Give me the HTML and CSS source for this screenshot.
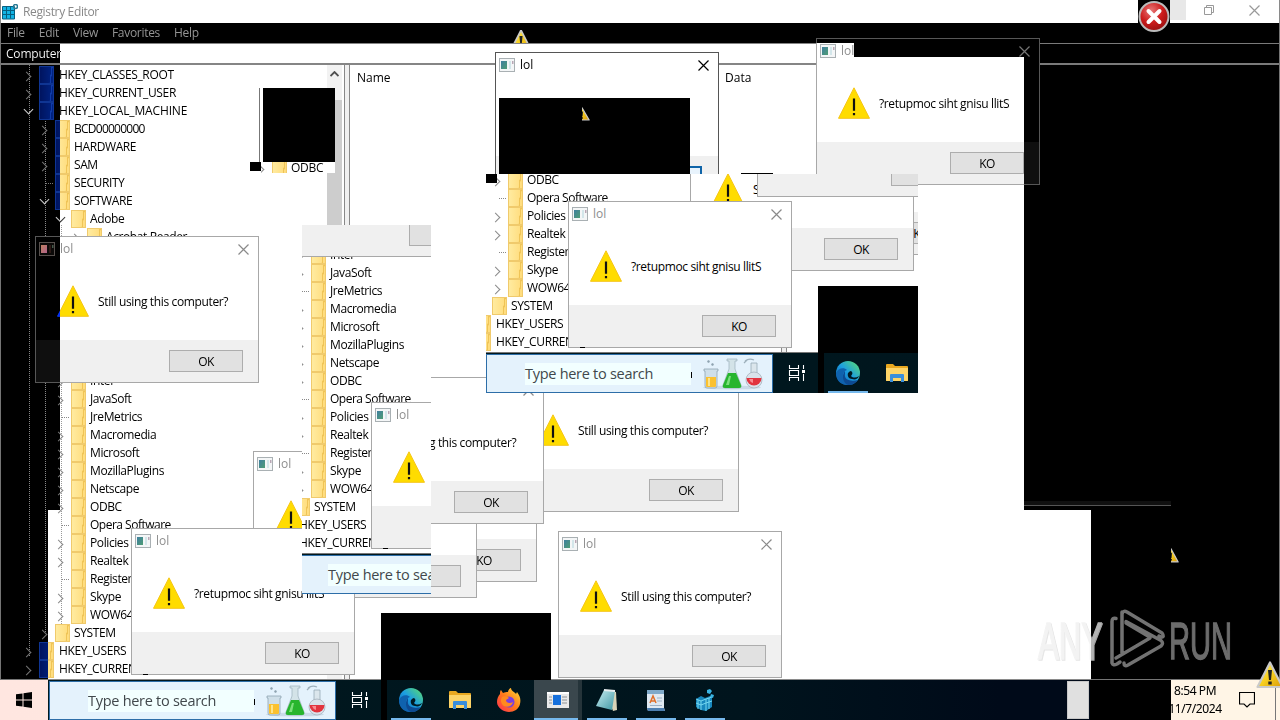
FILE: index.html
```html
<!DOCTYPE html>
<html lang="en">
<head>
<meta charset="utf-8">
<title>Registry Editor</title>
<link rel="stylesheet" href="styles.css">
</head>
<body>
<svg width="0" height="0" class="defs">
  <defs>
    <linearGradient id="gold" x1="0" y1="0" x2="1" y2="1"><stop offset="0" stop-color="#fff47a"/><stop offset=".5" stop-color="#f8d020"/><stop offset="1" stop-color="#d99a08"/></linearGradient>
    <linearGradient id="edgeg" x1="0" y1="1" x2="1" y2="0"><stop offset="0" stop-color="#0c59a4"/><stop offset=".5" stop-color="#1b9de2"/><stop offset="1" stop-color="#5fe06a"/></linearGradient>
    <linearGradient id="ffg" x1="0" y1="1" x2="1" y2="0"><stop offset="0" stop-color="#ff2a55"/><stop offset=".5" stop-color="#ff7a1a"/><stop offset="1" stop-color="#ffe03a"/></linearGradient>
    <linearGradient id="appg" x1="0" y1="0" x2="1" y2="1"><stop offset="0" stop-color="#3f7fa0"/><stop offset="1" stop-color="#4f9d74"/></linearGradient>
    <linearGradient id="noteg" x1="0" y1="0" x2="1" y2="1"><stop offset="0" stop-color="#c8eef2"/><stop offset="1" stop-color="#3f97a4"/></linearGradient>
    <radialGradient id="redg" cx=".4" cy=".3" r=".8"><stop offset="0" stop-color="#e87878"/><stop offset=".5" stop-color="#cc1c1c"/><stop offset="1" stop-color="#8c0c0c"/></radialGradient>
  </defs>
  <symbol id="app" viewBox="0 0 16 14"><rect x=".5" y=".5" width="15" height="13" fill="#f4f6f7" stroke="#a9b0b3"/><rect x="2" y="3" width="6" height="8" fill="url(#appg)"/><path d="M10 3h2v8h-2z" fill="#d3e6ea"/><path d="M13 3h1.500v3H13z" fill="#b9a7b5"/></symbol>
  <symbol id="warn" viewBox="0 0 32 32"><path d="M16 .8 31.500 31.300H.5z" fill="#ffdc00" stroke="#f5c518" stroke-width="1"/><path d="M14.900 11.500h2.200v12.300h-2.200zM14.900 26h2.200v2.300h-2.200z" fill="#111"/></symbol>
  <symbol id="warn3" viewBox="0 0 28 28"><path d="M14 1.500 26.500 26h-25z" fill="url(#gold)" stroke="#c9c9c9" stroke-width="2.200" stroke-linejoin="round"/><path d="M12 9h4l-1 10h-2zM12.300 20.500h3.400v3h-3.400z" fill="#222"/></symbol>
  <symbol id="x" viewBox="0 0 11 11"><path d="M.5.5l10 10M10.500.5l-10 10" fill="none" stroke="currentColor" stroke-width="1.200"/></symbol>
  <symbol id="flasks" viewBox="0 0 62 32">
    <ellipse cx="31" cy="29.500" rx="29" ry="2" fill="#c9dbe8"/>
    <path d="M3 11h14v2h-1v15q0 2-2 2H6q-2 0-2-2V13H3z" fill="#cfdfe9" stroke="#8fa4b3" stroke-width=".8"/><path d="M5 19h10v9q0 1-1 1H6q-1 0-1-1z" fill="#fbc12f"/><path d="M7 20h2v8H7z" fill="#ffe58a"/><path d="M6 3l2-1 1 2-2 1zM10 6l2-1 1 2-2 1z" fill="#8ea3b0"/>
    <path d="M26 1h10v2h-2v8l6 16q1 3-2 3H24q-3 0-2-3l6-16V3h-2z" fill="#d3e3e8" stroke="#9bb0ba" stroke-width=".7"/><path d="M27 15h8l5 12q1 3-2 3H24q-3 0-2-3z" fill="#27b52e"/><path d="M28 18l-3 9h3l2-9z" fill="#7be07c"/>
    <path d="M44 3q4-3 9-1M43 5l3-3" fill="none" stroke="#9db0bc" stroke-width="1.300"/><path d="M50 5h6v10h-6z" fill="#dbe6ec" stroke="#98abb8" stroke-width=".8"/><circle cx="53" cy="22" r="8" fill="#d9e2ea" stroke="#a7b3be" stroke-width=".8"/><path d="M45.500 20h15a7.500 7.500 0 1 1-15 0z" fill="#e2343f"/><path d="M48 21h4v4q-3-1-4-4z" fill="#f88a90"/>
  </symbol>
  <symbol id="win" viewBox="0 0 16 16"><path d="M0 2.300 6.500 1.400v6.100H0zM7.500 1.200 16 0v7.500H7.500zM0 8.500h6.500v6.100L0 13.700zM7.500 8.500H16V16l-8.500-1.200z" fill="#fff"/></symbol>
  <symbol id="task" viewBox="0 0 18 16"><path d="M1.500 0v3.500h9V0M1.500 16v-3.500h9V16M1.500 5.500h9v5h-9zM15.500 0v4M15.500 9v7" fill="none" stroke="#fff" stroke-width="1.100"/><path d="M14 5h3v3h-3z" fill="#fff"/></symbol>
  <symbol id="edge" viewBox="0 0 24 24"><circle cx="12" cy="12" r="12" fill="url(#edgeg)"/><path d="M0 12C2 7 8 6 11 9c-4 1-6 7-2 12 1 1 2 2 4 2.900C5 25 0 19 0 12z" fill="#0f62ae"/><path d="M9 13c-1 5 4 8 13 6-3 4-7 5.500-10 5-5-2-7-9-3-14z" fill="#0d4a92"/><path d="M12 12c2-2 3-3 4-1 1 1 0 3-1 4 2 2 5 2 8 0-1 3-4 4-7 3-3 0-5-3-4-6z" fill="#001a24"/></symbol>
  <symbol id="exp" viewBox="0 0 22 18"><path d="M0 1q0-1 1-1h6l2 2h12q1 0 1 1v14H0z" fill="#e9a820"/><path d="M0 4h22v12q0 1-1 1H1q-1 0-1-1z" fill="#fdd468"/><path d="M4 18v-7q0-1 1-1h12q1 0 1 1v7h-3v-4H7v4z" fill="#3a8edb"/></symbol>
  <symbol id="ff" viewBox="0 0 24 24"><path d="M3 6c0-2 0-3 1-4l2 3c2-1 3-1 5-1 0-2 2-4 3-4 0 3 4 4 5 6l1-2c3 4 4 7 3 12-1 5-6 8-11 8S0 20 0 14c0-3 1-6 3-8z" fill="url(#ffg)"/><circle cx="12" cy="14" r="5.500" fill="#7a3fe0"/><path d="M5 9c2-1 5-1 7 1l-3 2c0 3 4 4 7 2-1 4-5 6-9 4-3-2-4-6-2-9z" fill="#ff8a1f"/></symbol>
  <symbol id="dlgapp" viewBox="0 0 22 16"><path d="M0 0h22v16H0z" fill="#e9e9e9"/><path d="M0 0h22v2H0z" fill="#fff"/><path d="M6 3h8v10H6z" fill="#1670dc"/><path d="M2 5h3M2 8h3M2 11h3M15 5h5M15 8h5M15 11h5" stroke="#8f9396"/></symbol>
  <symbol id="note" viewBox="0 0 24 24"><path d="M10 2l11 2 1 18-4 1z" fill="#d9d4b8"/><path d="M9 2l11 1-3 19L1 18z" fill="url(#noteg)"/><path d="M9 2l11 1" stroke="#e8eef0" stroke-width="2"/></symbol>
  <symbol id="wpad" viewBox="0 0 20 22"><path d="M1 1h17v18l1 3H2l-1-3z" fill="#dfe9f2"/><path d="M1 1h17v4H1z" fill="#7fa9c9"/><path d="M4 14l3-7 3 7M5 12h4" fill="none" stroke="#e0702a" stroke-width="1.500"/><path d="M11 9h5M11 12h5M4 16.500h12" stroke="#9db2c6"/><path d="M1 19h17l1 3H2z" fill="#4d7fb0"/></symbol>
  <symbol id="reg" viewBox="0 0 20 22"><path d="M1 10l5-3 4 2 5-2 2 1v10l-6 4-5-1-5-3z" fill="#1787bd"/><path d="M1 10l5 2v9M6 12l5-2v12M1 14l5 2 5-2 6-2M11 10l6-2M14 9v11M3 11v9" fill="none" stroke="#74d8f0" stroke-width="1"/><path d="M12 1l3-1 2 2-2 3-3-1zM16 5l3 1-1 3-3-1z" fill="#39b4e4"/></symbol>
</svg>

<main class="desktop">
  <section class="window">
    <header class="titlebar">
      <svg class="regicon" viewBox="0 0 16 16"><path d="M0 2.500h12V15H0z" fill="#12b3e4"/><path d="M.5 6.500h12M.5 10.500h12M4.500 2v12.500M8.500 2v12.500M.5 2.500h12v12.500H.5z" fill="none" stroke="#075f80"/><circle cx="13.500" cy="2.500" r="2" fill="none" stroke="#2a7a94" stroke-width="1.500"/></svg>
      <span class="caption">Registry Editor</span>
      <span class="shade"></span>
      <svg class="restore" viewBox="0 0 10 10"><path d="M.5 2.500h7v7h-7zM2.500 2.500v-2h7v7h-2" fill="none" stroke="#999"/></svg>
      <svg class="xbtn"><use href="#x"/></svg>
    </header>
    <nav class="menu"><span>File</span><span>Edit</span><span>View</span><span>Favorites</span><span>Help</span></nav>
    <div class="address">Computer</div>
    <div class="panes">
      <div class="tree">
        <div class="row l0 c">HKEY_CLASSES_ROOT</div>
        <div class="row l0 c">HKEY_CURRENT_USER</div>
        <div class="row l0 o wide">HKEY_LOCAL_MACHINE</div>
        <div class="row l1 c tight">BCD00000000</div>
        <div class="row l1 c">HARDWARE</div>
        <div class="row l1 c">SAM</div>
        <div class="row l1 n">SECURITY</div>
        <div class="row l1 o">SOFTWARE</div>
        <div class="row l2 o">Adobe</div>
        <div class="row l3 c">Acrobat Reader</div>
        <div class="gap"></div>
        <div class="row l2 c">Intel</div>
        <div class="row l2 c">JavaSoft</div>
        <div class="row l2 n">JreMetrics</div>
        <div class="row l2 c">Macromedia</div>
        <div class="row l2 c">Microsoft</div>
        <div class="row l2 c">MozillaPlugins</div>
        <div class="row l2 c">Netscape</div>
        <div class="row l2 c">ODBC</div>
        <div class="row l2 n soft">Opera Software</div>
        <div class="row l2 c">Policies</div>
        <div class="row l2 c">Realtek</div>
        <div class="row l2 n">Register</div>
        <div class="row l2 c">Skype</div>
        <div class="row l2 c">WOW64</div>
        <div class="row l1 c">SYSTEM</div>
        <div class="row l0 c">HKEY_USERS</div>
        <div class="row l0 c">HKEY_CURREN</div>
      </div>
      <div class="scroll"><svg viewBox="0 0 9 6"><path d="M.5 5 4.500 1l4 4" fill="none" stroke="#505050" stroke-width="1.800"/></svg><div class="thumb"></div></div>
      <div class="divider"></div>
      <div class="list"><span class="col-name">Name</span><span>Data</span></div>
    </div>
  </section>

  <footer class="taskbar">
    <div class="start"><svg><use href="#win"/></svg></div>
    <div class="search"><span class="hint">Type here to search</span><i class="caret"></i><svg><use href="#flasks"/></svg></div>
    <div class="tb view"><svg><use href="#task"/></svg></div>
    <div class="strip"></div>
    <div class="tb run"><svg class="i24"><use href="#edge"/></svg></div>
    <div class="tb"><svg class="i22"><use href="#exp"/></svg></div>
    <div class="tb"><svg class="i24"><use href="#ff"/></svg></div>
    <div class="tb run active"><svg class="i22 s16"><use href="#dlgapp"/></svg></div>
    <div class="tb run"><svg class="i24"><use href="#note"/></svg></div>
    <div class="tb run"><svg class="i20"><use href="#wpad"/></svg></div>
    <div class="tb run"><svg class="i20"><use href="#reg"/></svg></div>
    <div class="tray">
      <div class="peek"></div><div class="blank"></div>
      <div class="clock"><span>8:54 PM</span><span>11/7/2024</span></div>
      <svg class="bubble" viewBox="0 0 16 16"><path d="M.5.5h15v11.500h-4.500L8 15l-3-3H.5z" fill="none" stroke="#fff" stroke-width="1.200"/></svg>
      <div class="edge-line"></div>
    </div>
  </footer>

  <div class="dlg" style="left:313px;top:435px"><div class="dt"></div><div class="db"></div><div class="df"><div class="btn">KO</div></div></div>
  <div class="dlg" style="left:253px;top:451px"><div class="dt"><svg class="da"><use href="#app"/></svg>lol</div><div class="db"><svg><use href="#warn"/></svg></div><div class="df"><div class="btn"></div></div></div>
  <div class="dlg" style="left:515px;top:365px"><div class="dt"></div><div class="db"><svg><use href="#warn"/></svg><span>Still using this computer?</span></div><div class="df"><div class="btn">OK</div></div></div>
  <div class="dlg" style="left:320px;top:377px"><div class="dt"><svg class="dx"><use href="#x"/></svg></div><div class="db"><svg></svg><span class="tail">g this computer?</span></div><div class="df"><div class="btn">OK</div></div></div>
  <div class="dlg" style="left:35px;top:236px"><div class="dt"><svg class="da"><use href="#app"/></svg>lol<svg class="dx"><use href="#x"/></svg></div><div class="db"><svg><use href="#warn"/></svg><span>Still using this computer?</span></div><div class="df"><div class="btn">OK</div></div></div>
  <div class="dlg" style="left:558px;top:531px"><div class="dt"><svg class="da"><use href="#app"/></svg>lol<svg class="dx"><use href="#x"/></svg></div><div class="db"><svg><use href="#warn"/></svg><span>Still using this computer?</span></div><div class="df"><div class="btn">OK</div></div></div>
  <div class="dlg" style="left:131px;top:528px"><div class="dt"><svg class="da"><use href="#app"/></svg>lol</div><div class="db"><svg><use href="#warn"/></svg><span>?retupmoc siht gnisu llitS</span></div><div class="df"><div class="btn">KO</div></div></div>
  <div class="dlg" style="left:816px;top:38px"><div class="dt"><svg class="da"><use href="#app"/></svg>lol<svg class="dx"><use href="#x"/></svg></div><div class="db"><svg><use href="#warn"/></svg><span>?retupmoc siht gnisu llitS</span></div><div class="df"><div class="btn">KO</div></div></div>
  <div class="shadowline"></div>
  <div class="inv menu-inv"></div>
  <div class="inv left-a"></div>
  <div class="inv left-b"></div>
  <div class="inv right-a"></div>
  <div class="inv right-b"></div>
  <div class="inv right-c"></div>
  <div class="inv clock-inv"></div>

  <div class="dlg front" style="left:495px;top:52px"><div class="dt"><svg class="da"><use href="#app"/></svg>lol<svg class="dx"><use href="#x"/></svg></div><div class="db"></div><div class="df"><div class="btn blue"></div></div></div>
  <div class="black b1"></div><div class="black b2"></div><div class="black b3"></div>

  <div class="patch small"><div class="row l2 c">ODBC</div></div>
  <div class="vline"></div><div class="black b4"></div>

  <div class="patch p1"><div class="inner i1">
    <div class="tree copy">
      <div class="row l2 c">Intel</div><div class="row l2 c">JavaSoft</div><div class="row l2 n">JreMetrics</div><div class="row l2 c">Macromedia</div><div class="row l2 c">Microsoft</div><div class="row l2 c">MozillaPlugins</div><div class="row l2 c">Netscape</div><div class="row l2 c">ODBC</div><div class="row l2 n soft">Opera Software</div><div class="row l2 c">Policies</div><div class="row l2 c">Realtek</div><div class="row l2 n">Register</div><div class="row l2 c">Skype</div><div class="row l2 c">WOW64</div><div class="row l1 c">SYSTEM</div><div class="row l0 c">HKEY_USERS</div><div class="row l0 c">HKEY_CURREN</div>
    </div>
    <div class="dlg" style="left:35px;top:236px"><div class="dt"></div><div class="db"></div><div class="df"><div class="btn"></div></div></div>
    <div class="dlg" style="left:131px;top:528px"><div class="dt"><svg class="da"><use href="#app"/></svg>lol</div><div class="db"><svg><use href="#warn"/></svg></div><div class="df"></div></div>
    <div class="taskbar"><div class="start"></div><div class="search"><span class="hint">Type here to search</span></div></div>
  </div></div>

  <div class="patch p2"><div class="inner i2">
    <div class="tree copy second">
      <div class="row l2 c">ODBC</div><div class="row l2 n soft">Opera Software</div><div class="row l2 c">Policies</div><div class="row l2 c">Realtek</div><div class="row l2 n">Register</div><div class="row l2 c">Skype</div><div class="row l2 c">WOW64</div><div class="row l1">SYSTEM</div><div class="row l0">HKEY_USERS</div><div class="row l0">HKEY_CURREN</div>
    </div>
    <div class="divider stub"></div>
    <div class="dlg" style="left:313px;top:435px"><div class="dt"></div><div class="db"></div><div class="df"><div class="btn">KO</div></div></div>
    <div class="dlg" style="left:253px;top:451px"><div class="dt"></div><div class="db"><svg><use href="#warn"/></svg><span>S</span></div><div class="df"><div class="btn">OK</div></div></div>
    <div class="dlg" style="left:320px;top:377px"><div class="dt"></div><div class="db"></div><div class="df"><div class="btn"></div></div></div>
    <div class="dlg" style="left:131px;top:528px"><div class="dt"><svg class="da"><use href="#app"/></svg>lol<svg class="dx"><use href="#x"/></svg></div><div class="db"><svg><use href="#warn"/></svg><span>?retupmoc siht gnisu llitS</span></div><div class="df"><div class="btn">KO</div></div></div>
    <div class="taskbar"><div class="start"></div><div class="search"><span class="hint">Type here to search</span><i class="caret"></i><svg><use href="#flasks"/></svg></div><div class="tb view"><svg><use href="#task"/></svg></div><div class="strip"></div><div class="tb run"><svg class="i24"><use href="#edge"/></svg></div><div class="tb"><svg class="i22"><use href="#exp"/></svg></div></div>
    <div class="black b5"></div>
  </div></div>
  <div class="black b6"></div><div class="black b7"></div>
  <div class="black dash u1"></div><div class="black dash u2"></div><div class="black dash u3"></div>

  <svg class="cur k1" viewBox="0 0 20 13"><use href="#warn3" x="-1" y="-1" width="22" height="22"/></svg>
  <svg class="cur k2" viewBox="14 0 14 28" preserveAspectRatio="none"><use href="#warn3" width="28" height="28"/></svg>
  <svg class="cur k3" viewBox="14 0 14 28" preserveAspectRatio="none"><use href="#warn3" width="28" height="28"/></svg>
  <svg class="cur k4"><use href="#warn3"/></svg>
  <div class="stop"><svg viewBox="0 0 32 32"><circle cx="16" cy="16" r="14.500" fill="url(#redg)" stroke="#bbb" stroke-width="2"/><path d="M10.500 10.500l11 11M21.500 10.500l-11 11" stroke="#fff" stroke-width="4" stroke-linecap="round"/></svg></div>

  <svg class="mark" viewBox="0 0 200 64">
    <g class="mark-ghost"><text x="3" y="51" textLength="64" lengthAdjust="spacingAndGlyphs">ANY</text></g>
    <g class="mark-face"><text x="2" y="50" textLength="64" lengthAdjust="spacingAndGlyphs">ANY</text><text x="133" y="50" textLength="63" lengthAdjust="spacingAndGlyphs">RUN</text></g>
    <path class="mark-logo" d="M80 9.500q-4-1-4 3V54q1 3 5 1l3-2M86 44V5q1-4 5-2l35 21q3 4-1 4l-2-1M90 14l22 13M86 43V3M80 49l34-20M88 54q0 4 4 2l33-19q3-3 0-5.500L90 12.500"/>
  </svg>
</main>
</body>
</html>
```
FILE: styles.css
```css
* { box-sizing: border-box; }
body { margin: 0; width: 1280px; height: 720px; overflow: hidden; background: #fff; font: 12px/18px "Open Sans", "Noto Sans", sans-serif; color: #000; }
.defs { position: absolute; }
.desktop { position: relative; width: 1280px; height: 720px; overflow: hidden; background: #fff; isolation: isolate; display: flex; flex-direction: column; }
svg { display: block; flex: none; }

.window { height: 680px; display: flex; flex-direction: column; border-left: 1px solid #8a8a8a; border-right: 1px solid #8a8a8a; border-bottom: 1px solid #8a8a8a; }
.titlebar { height: 23px; display: flex; align-items: center; padding-left: 2px; margin-left: -1px; color: #888; }
.regicon { width: 16px; height: 16px; }
.caption { margin-left: 5px; width: 1147px; letter-spacing: -0.35px; padding-top: 1px; }
.shade { width: 16px; height: 20px; background: #e8e8e8; align-self: flex-start; }
.restore { width: 10px; height: 10px; margin: -3px 0 0 18px; }
.xbtn { width: 11px; height: 11px; margin: -3px 0 0 35px; color: #999; }
.menu { height: 20px; display: flex; gap: 14px; padding: 1px 0 0 6px; color: #6b6b6b; letter-spacing: -0.3px; }
.address { height: 22px; border-top: 1px solid #858585; border-bottom: 2px solid #858585; padding: 1px 0 0 5px; line-height: 18px; letter-spacing: -0.2px; }
.panes { flex: 1; display: flex; overflow: hidden; }
.tree { width: 326px; padding-top: 1px; overflow: hidden; letter-spacing: -0.35px;
  background-image: repeating-linear-gradient(#777 0 1px, transparent 1px 2px), repeating-linear-gradient(#777 0 1px, transparent 1px 2px), repeating-linear-gradient(#999 0 1px, transparent 1px 2px);
  background-size: 1px 592px, 1px 512px, 1px 400px; background-position: 28px 0, 44px 56px, 60px 160px; background-repeat: no-repeat; }
.gap { height: 126px; }
.row { position: relative; height: 18px; line-height: 18px; display: flex; align-items: center; white-space: nowrap; }
.l0 { padding-left: 38px; }
.l1 { padding-left: 54px; }
.l2 { padding-left: 70px; }
.l3 { padding-left: 86px; }
.l1, .l2, .l3 { letter-spacing: -0.4px; }
.tight { letter-spacing: -0.75px; }
.wide { letter-spacing: -0.15px; }
.soft { letter-spacing: -0.5px; }
.row::before { content: ""; flex: none; width: 13px; height: 16px; margin-right: 5px; border: 1px solid #f0ca6c; background: linear-gradient(97deg, transparent 76%, #efc457 77% 84%, transparent 85%), linear-gradient(90deg, #ffeba0, #ffdc7c); }
.l1::before, .l2::before, .l3::before { margin-right: 4px; }
.row::after { content: ""; position: absolute; width: 6px; height: 6px; top: 7px; border: solid #8a8a8a; border-width: 1.500px 1.500px 0 0; transform: rotate(45deg); margin-left: -16px; }
.l0::after { left: 38px; } .l1::after { left: 54px; } .l2::after { left: 70px; } .l3::after { left: 86px; }
.o::after { transform: rotate(135deg); border-color: #333; margin-top: -3px; margin-left: -14px; }
.n::after { transform: none; border: 0; width: 8px; height: 1px; top: 9px; margin-left: -9px; background: repeating-linear-gradient(90deg, #888 0 1px, transparent 1px 2px); }
.second .l1::after, .second .l0::after { display: none; }
.thumb { width: 15px; height: 128px; margin-top: 23px; background: #cdcdcd; }
.scroll { width: 15px; display: flex; flex-direction: column; align-items: center; padding-top: 6px; background: linear-gradient(#f2f2f2 0 164px, #fff 164px 600px, #f2f2f2 600px); }
.scroll svg { width: 9px; height: 6px; }
.divider { width: 6px; margin-left: 2px; border: 1px solid #888; border-width: 0 1px; background: #f0f0f0; }
.list { flex: 1; display: flex; padding: 4px 0 0 7px; }
.col-name { width: 368px; }

.taskbar { height: 40px; display: flex; background: linear-gradient(90deg, #00191f 0, #00141d 750px, #000a19 1000px); }
.start { width: 48px; display: flex; align-items: center; justify-content: center; }
.start svg { width: 16px; height: 16px; }
.search { width: 287px; height: 39px; margin: 1px 0 0 1px; display: flex; align-items: center; background: #e4f2fc; border: 1px solid #2d6ea8; padding-left: 38px; }
.hint { width: 166px; height: 22px; background: #f2ffff; color: #41484c; font-size: 14.500px; line-height: 22px; letter-spacing: -0.28px; white-space: nowrap; }
.caret { width: 1px; height: 6px; background: #000; margin-top: 2px; }
.search svg { width: 62px; height: 32px; margin-left: 9px; }
.tb { width: 49px; display: flex; align-items: center; justify-content: center; position: relative; padding-right: 2px; }
.view { width: 45px; padding: 0 0 0 3px; }
.view svg { width: 18px; height: 16px; }
.strip { width: 6px; background: #000; }
.run::after { content: ""; position: absolute; left: 4px; bottom: 0; width: 40px; height: 2px; background: #76b9ed; }
.active { background: linear-gradient(90deg, #3a474d 0 44px, #25343a 44px 48px, transparent 48px); }
.active::after { left: 0; width: 44px; }
.i24 { width: 24px; height: 24px; }
.i22 { width: 22px; height: 18px; }
.s16 { height: 16px; }
.i20 { width: 20px; height: 22px; }
.tray { flex: 1; display: flex; align-items: center; justify-content: flex-end; }
.peek { width: 22px; height: 38px; background: #e0e0e0; border: 1px solid #c8c8c8; }
.blank { width: 81px; height: 40px; background: #000; margin-left: 1px; }
.clock { width: 68px; height: 40px; display: flex; flex-direction: column; justify-content: center; color: #fff; letter-spacing: -0.4px; align-items: center; padding-right: 20px; white-space: nowrap; overflow: hidden; }
.bubble { width: 16px; height: 16px; }
.edge-line { width: 1px; height: 40px; background: #888; margin: 0 4px 0 20px; }

.dlg { position: absolute; width: 224px; height: 147px; border: 1px solid #a8a8a8; background: #fff; display: flex; flex-direction: column; overflow: hidden; }
.dt { height: 24px; display: flex; align-items: center; padding-left: 3px; color: #8e8e8e; }
.da { width: 16px; height: 14px; margin-right: 5px; }
.dx { width: 11px; height: 11px; margin-left: auto; margin-right: 9px; color: #8a8a8a; }
.db { height: 79px; display: flex; align-items: center; padding-left: 21px; padding-top: 2px; letter-spacing: -0.36px; white-space: nowrap; }
.db svg { width: 32px; height: 32px; margin: -1px 9px 0 0; }
.db .tail { margin-left: 46px; }
.df { flex: 1; background: #f0f0f0; display: flex; justify-content: flex-end; padding: 10px 15px 0 0; }
.btn { width: 74px; height: 22px; border: 1px solid #adadad; background: #e1e1e1; text-align: center; line-height: 21px; letter-spacing: -0.5px; }
.front { border-color: #555; }
.front .dt, .front .dx { color: #000; }
.front .btn { margin-right: 1px; }
.blue { border: 2px solid #0f64a8; background: #e8f3fc; }

.inv { position: absolute; background: #fff; mix-blend-mode: difference; }
.menu-inv { left: 0; top: 23px; width: 1280px; height: 20px; }
.left-a { left: 0; top: 43px; width: 60px; height: 467px; }
.left-b { left: 0; top: 510px; width: 48px; height: 210px; }
.right-a { left: 854px; top: 43px; width: 426px; height: 14px; }
.right-b { left: 1024px; top: 57px; width: 256px; height: 453px; }
.right-c { left: 1091px; top: 510px; width: 189px; height: 170px; }
.clock-inv { left: 1171px; top: 680px; width: 109px; height: 40px; }
.shadowline { position: absolute; left: 1024px; top: 501px; width: 147px; height: 5px; background: #efefef; border-bottom: 1px solid #aaa; }

.black { position: absolute; background: #000; }
.b1 { left: 499px; top: 98px; width: 191px; height: 76px; }
.b2 { left: 263px; top: 88px; width: 72px; height: 74px; }
.b3 { left: 381px; top: 613px; width: 170px; height: 67px; }
.b4 { left: 250px; top: 162px; width: 11px; height: 9px; }
.b5 { left: 381px; top: 613px; width: 170px; height: 67px; }
.b6 { left: 486px; top: 174px; width: 11px; height: 9px; }
.b7 { left: 741px; top: 173px; width: 32px; height: 1px; }
.dash { width: 5px; height: 1px; }
.u1 { left: 143px; top: 674px; }
.u2 { left: 383px; top: 548px; }
.u3 { left: 580px; top: 347px; }
.vline { position: absolute; left: 259px; top: 88px; width: 1px; height: 74px; background: #777; }
.patch { position: absolute; overflow: hidden; background: #fff; }
.small { left: 261px; top: 162px; width: 74px; height: 11px; }
.small .row { margin: -3px 0 0 -59px; letter-spacing: -0.3px; }
.inner { position: absolute; width: 600px; height: 720px; background: #fff; }
.p1 { left: 302px; top: 225px; width: 129px; height: 369px; }
.i1 { left: -62px; top: -351px; }
.p2 { left: 486px; top: 174px; width: 432px; height: 219px; }
.i2 { left: -49px; top: -501px; }
.copy { position: absolute; left: 1px; top: 371px; height: 308px; background: none; }
.copy.second { top: 497px; height: 182px; }
.stub { position: absolute; left: 342px; top: 670px; height: 9px; }
.inner .taskbar { position: absolute; left: 0; top: 679px; width: 600px; height: 41px; border-top: 1px solid #777; }

.cur { position: absolute; overflow: hidden; }
.k1 { left: 511px; top: 30px; width: 20px; height: 13px; }
.k2 { left: 582px; top: 107px; width: 8px; height: 14px; }
.k3 { left: 1171px; top: 548px; width: 8px; height: 15px; }
.k4 { left: 1256px; top: 661px; width: 28px; height: 28px; }
.stop { position: absolute; left: 1138px; top: 0; width: 32px; height: 33px; background: linear-gradient(#000 0 23px, transparent 23px); }
.stop svg { width: 32px; height: 33px; }
.mark { position: absolute; left: 1036px; top: 609px; width: 200px; height: 64px; opacity: .75; }
.mark text { font: 51px "Liberation Sans", sans-serif; stroke-width: 1.500px; }
.mark-ghost text { fill: #ddd; stroke: #ddd; }
.mark-face text { fill: #909090; stroke: #909090; }
.mark-face text:first-child { fill: #f0f0f0; stroke: #f0f0f0; }
.mark-logo { fill: none; stroke: #999; stroke-width: 3.500; stroke-linejoin: round; stroke-linecap: round; }
```
